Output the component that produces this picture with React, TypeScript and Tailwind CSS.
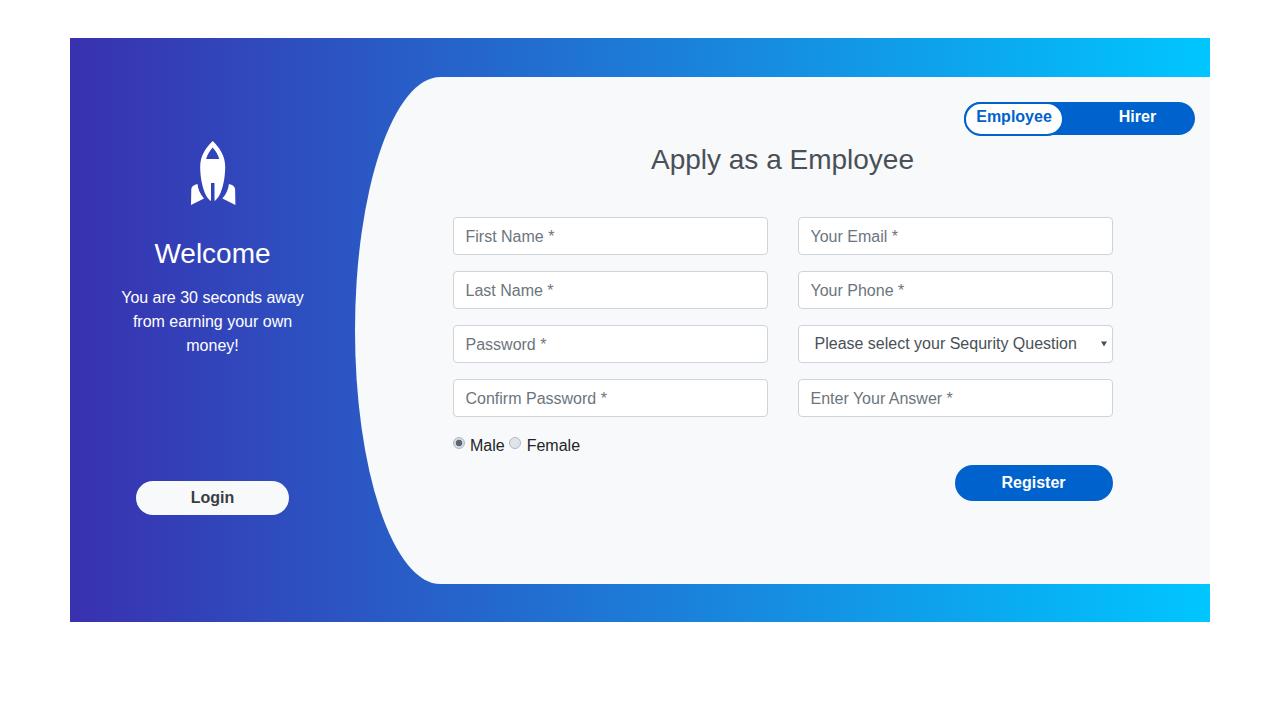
import { useState } from "react";

const inputClass = "block w-full h-[38px] pl-3 pr-3 pt-[7px] pb-[5px] bg-white border border-[#ced4da] rounded text-base text-[#495057] placeholder-[#6c757d] outline-none";
const radioClass = "appearance-none w-3 h-3 rounded-full border border-[#b0bac9] bg-[#dfe3ea] checked:bg-[radial-gradient(circle,#5f6570_0,#5f6570_3px,#d5d9e2_3.6px)] mb-[6px] shrink-0";

function Rocket() {
  return (
    <svg width="46" height="66" viewBox="0 0 46 66" fill="#ffffff">
      <path
        fillRule="evenodd"
        d="M22.7 1C16 7.5 10.2 15.5 10.2 27C10.2 41 14.5 57.5 21 61V43H24.5V61C31 57.5 35.2 41 35.2 27C35.2 15.5 29.4 7.5 22.7 1ZM22.7 7.5C25.5 10.5 28 14.5 29.3 19H16.1C17.4 14.5 19.9 10.5 22.7 7.5Z"
      />
      <path d="M1 65L1.3 49C1.5 46.5 4 44.6 7.5 44C8 49 10 54 14 58.5Z" />
      <path d="M45.4 65L45.1 49C44.9 46.5 42.4 44.6 38.9 44C38.4 49 36.4 54 32.4 58.5Z" />
    </svg>
  );
}

export default function App() {
  const [gender, setGender] = useState("male");

  return (
    <div className="min-h-[720px] bg-white pt-[38px] px-[70px] font-['Liberation_Sans',Arial,sans-serif]">
      <div className="flex pt-[39px] pb-[38px] bg-[linear-gradient(to_right,#3931af,#00c6ff)]">
        <div className="w-[285px] shrink-0 flex flex-col items-center text-white text-center px-[45px]">
          <div className="mt-[63px] h-[66px]">
            <Rocket />
          </div>
          <h3 className="mt-[31px] text-[28px] leading-[34px] font-normal w-[220px]">Welcome</h3>
          <p className="mt-[15px] text-base leading-6">You are 30 seconds away from earning your own money!</p>
          <button type="button" className="mt-[123px] w-[153px] h-[34px] rounded-full bg-[#f8f9fa] text-[#383d41] text-base font-bold">
            Login
          </button>
        </div>

        <div className="flex-1 h-[507px] bg-[#f8f9fa] rounded-[10%_0_0_10%/50%] flex flex-col">
          <div className="flex justify-end pt-[25px] pr-[15px]">
            <div className="w-[231px] h-[33px] rounded-[20px] bg-[#0062cc] flex font-bold text-base">
              <button type="button" className="w-[100px] shrink-0 h-[34px] rounded-[20px] bg-white border-2 border-[#0062cc] text-[#0062cc] leading-[26px] pb-1">
                Employee
              </button>
              <button type="button" className="flex-1 h-[30px] text-white pl-[16px]">
                Hirer
              </button>
            </div>
          </div>

          <h3 className="mt-[8px] text-center text-[28px] leading-[34px] font-normal text-[#495057] px-[97.5px]">
            Apply as a Employee
          </h3>

          <div className="mt-[40px] px-[97.5px]">
            <div className="grid grid-cols-2 gap-x-[30px] gap-y-4">
              <input className={inputClass} placeholder="First Name *" />
              <input className={inputClass} placeholder="Your Email *" />
              <input className={inputClass} placeholder="Last Name *" />
              <input className={inputClass} placeholder="Your Phone *" />
              <input className={inputClass} type="password" placeholder="Password *" />
              <div className="relative">
                <select className="block w-full h-[38px] pl-4 pr-3 pb-[1px] bg-white border border-[#ced4da] rounded text-base text-[#495057] outline-none appearance-none" defaultValue="">
                  <option value="" disabled hidden>
                    Please select your Sequrity Question
                  </option>
                  <option>What is your Birthdate?</option>
                  <option>What is Your old Phone Number</option>
                  <option>What is your Pet Name?</option>
                </select>
                <svg className="absolute right-[6px] top-4 pointer-events-none" width="6" height="6" viewBox="0 0 6 6" fill="#4a4f55">
                  <path d="M0 0.5H6L3 5.5Z" />
                </svg>
              </div>
              <input className={inputClass} type="password" placeholder="Confirm Password *" />
              <input className={inputClass} placeholder="Enter Your Answer *" />
            </div>

            <div className="mt-[17px] h-6 flex items-center text-base text-[#212529]">
              <input type="radio" name="gender" className={radioClass} checked={gender === "male"} onChange={() => setGender("male")} />
              <span className="ml-[5.5px] mr-[4.5px]">Male</span>
              <input type="radio" name="gender" className={radioClass} checked={gender === "female"} onChange={() => setGender("female")} />
              <span className="ml-[5.5px]">Female</span>
            </div>

            <div className="mt-[7px] flex justify-end">
              <button type="button" className="w-[158px] h-9 rounded-full bg-[#0062cc] text-white text-base font-bold">
                Register
              </button>
            </div>
          </div>
        </div>
      </div>
    </div>
  );
}
